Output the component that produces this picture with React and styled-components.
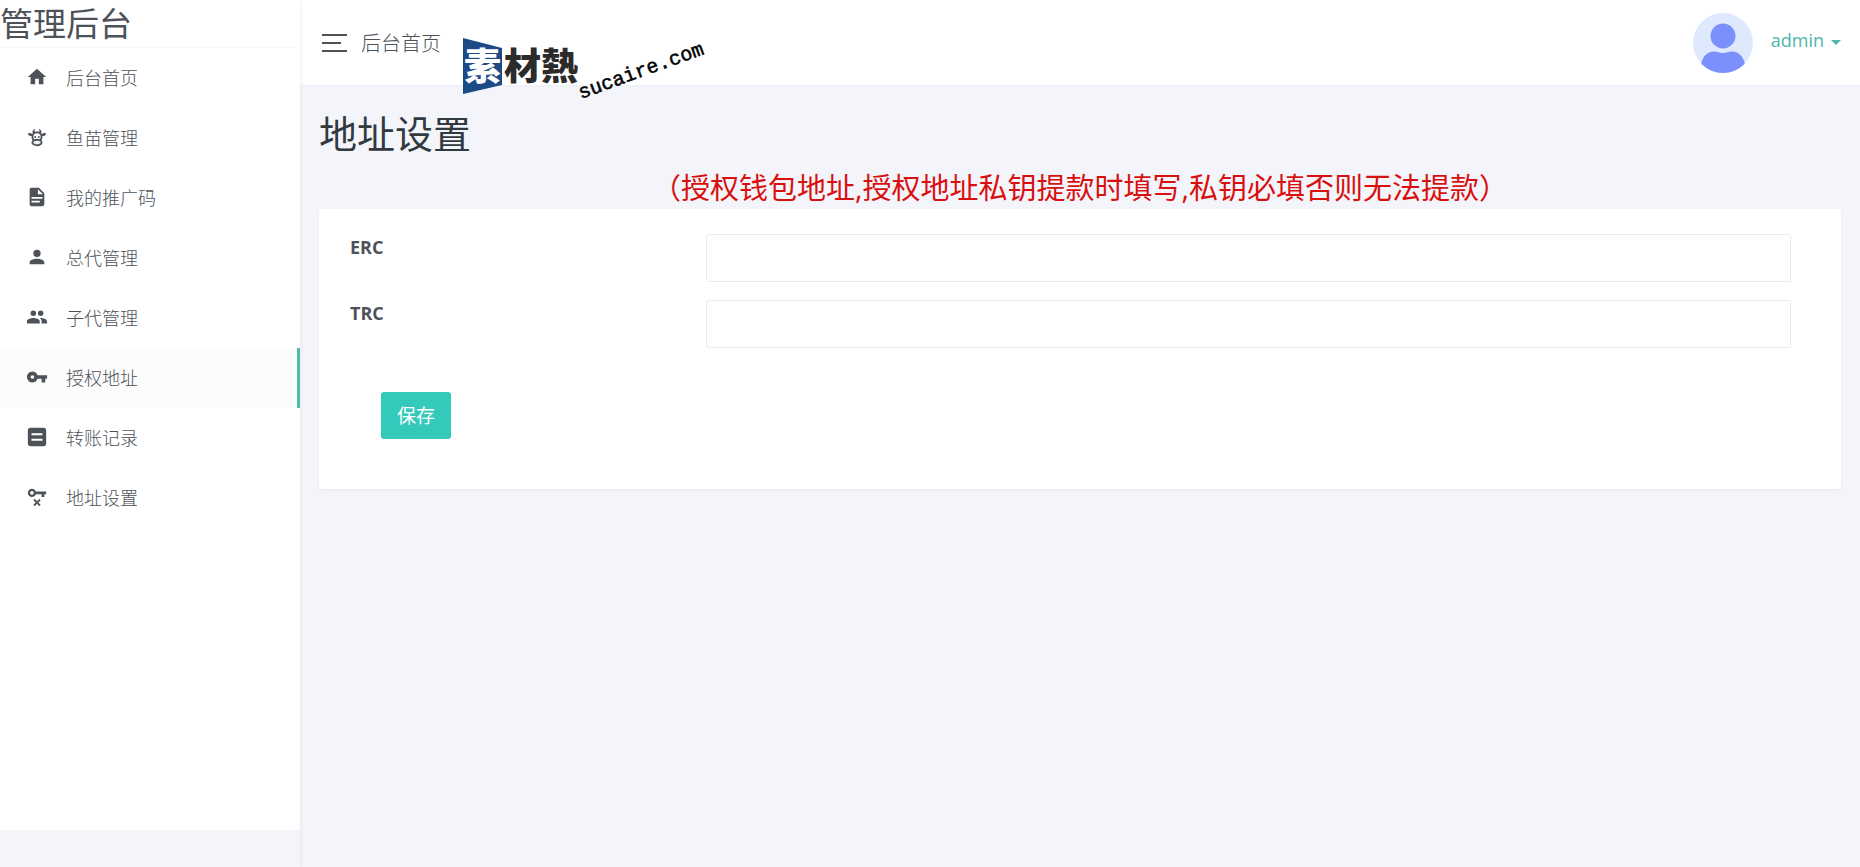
import React, { useState } from "react";
import styled, { createGlobalStyle, css } from "styled-components";

const icons = {
  home: "M10,20V14H14V20H19V12H22L12,3L2,12H5V20H10Z",
  cow: "M10.5,18A0.5,0.5 0 0,1 11,18.5A0.5,0.5 0 0,1 10.5,19A0.5,0.5 0 0,1 10,18.5A0.5,0.5 0 0,1 10.5,18M13.5,18A0.5,0.5 0 0,1 14,18.5A0.5,0.5 0 0,1 13.5,19A0.5,0.5 0 0,1 13,18.5A0.5,0.5 0 0,1 13.5,18M10,11A1,1 0 0,1 11,12A1,1 0 0,1 10,13A1,1 0 0,1 9,12A1,1 0 0,1 10,11M14,11A1,1 0 0,1 15,12A1,1 0 0,1 14,13A1,1 0 0,1 13,12A1,1 0 0,1 14,11M18,18C18,20.21 15.31,22 12,22C8.69,22 6,20.21 6,18C6,17.1 6.45,16.27 7.2,15.6C6.45,14.6 6,13.35 6,12L6.12,10.78C5.58,10.93 4.93,10.93 4.4,10.78C3.38,10.5 1.84,9.35 2.07,8.55C2.3,7.75 4.21,7.6 5.23,7.9C5.82,8.07 6.45,8.5 6.82,8.96L7.39,8.15C6.79,7.05 7,4 10,3L9.91,3.14V3.14C9.63,3.58 8.91,4.97 9.67,6.47C10.39,6.17 11.17,6 12,6C12.83,6 13.61,6.17 14.33,6.47C15.09,4.97 14.37,3.58 14.09,3.14L14,3C17,4 17.21,7.05 16.61,8.15L17.18,8.96C17.55,8.5 18.18,8.07 18.77,7.9C19.79,7.6 21.7,7.75 21.93,8.55C22.16,9.35 20.62,10.5 19.6,10.78C19.07,10.93 18.42,10.93 17.88,10.78L18,12C18,13.35 17.55,14.6 16.8,15.6C17.55,16.27 18,17.1 18,18M12,16C9.79,16 8,16.9 8,18C8,19.1 9.79,20 12,20C14.21,20 16,19.1 16,18C16,16.9 14.21,16 12,16M12,14C13.12,14 14.17,14.21 15.07,14.56C15.65,13.87 16,13 16,12A4,4 0 0,0 12,8A4,4 0 0,0 8,12C8,13 8.35,13.87 8.93,14.56C9.83,14.21 10.88,14 12,14Z",
  file: "M13,9H18.5L13,3.5V9M6,2H14L20,8V20A2,2 0 0,1 18,22H6C4.89,22 4,21.1 4,20V4C4,2.89 4.89,2 6,2M15,18V16H6V18H15M18,14V12H6V14H18Z",
  account:
    "M12,4A4,4 0 0,1 16,8A4,4 0 0,1 12,12A4,4 0 0,1 8,8A4,4 0 0,1 12,4M12,14C16.42,14 20,15.79 20,18V20H4V18C4,15.79 7.58,14 12,14Z",
  accounts:
    "M16,13C15.71,13 15.38,13 15.03,13.05C16.19,13.89 17,15 17,16.5V19H23V16.5C23,14.17 18.33,13 16,13M8,13C5.67,13 1,14.17 1,16.5V19H15V16.5C15,14.17 10.33,13 8,13M8,11A3,3 0 0,0 11,8A3,3 0 0,0 8,5A3,3 0 0,0 5,8A3,3 0 0,0 8,11M16,11A3,3 0 0,0 19,8A3,3 0 0,0 16,5A3,3 0 0,0 13,8A3,3 0 0,0 16,11Z",
  key: "M7,14A2,2 0 0,1 5,12A2,2 0 0,1 7,10A2,2 0 0,1 9,12A2,2 0 0,1 7,14M12.65,10C11.83,7.67 9.61,6 7,6A6,6 0 0,0 1,12A6,6 0 0,0 7,18C9.61,18 11.83,16.33 12.65,14H17V18H21V14H23V10H12.65Z",
  note: "M5,2H19A3,3 0 0,1 22,5V19A3,3 0 0,1 19,22H5A3,3 0 0,1 2,19V5A3,3 0 0,1 5,2M6,8V10H18V8H6M6,14V16H18V14H6Z",
  keyRemove:
    "M6.5,3C8.46,3 10.13,4.25 10.74,6H22V9H20V12H17V9H10.74C10.13,10.75 8.46,12 6.5,12A4.5,4.5 0 0,1 2,7.5A4.5,4.5 0 0,1 6.5,3M6.5,5.5A2,2 0 0,0 4.5,7.5A2,2 0 0,0 6.5,9.5A2,2 0 0,0 8.5,7.5A2,2 0 0,0 6.5,5.5M9.46,14L12,16.54L14.54,14L16,15.46L13.46,18L16,20.54L14.54,22L12,19.46L9.46,22L8,20.54L10.54,18L8,15.46Z",
};

const menu = [
  { icon: "home", label: "后台首页" },
  { icon: "cow", label: "鱼苗管理" },
  { icon: "file", label: "我的推广码" },
  { icon: "account", label: "总代管理" },
  { icon: "accounts", label: "子代管理" },
  { icon: "key", label: "授权地址", active: true },
  { icon: "note", label: "转账记录" },
  { icon: "keyRemove", label: "地址设置" },
];

const Icon = ({ name }) => (
  <svg width="22" height="22" viewBox="0 0 24 24" aria-hidden="true">
    <path d={icons[name]} fill="currentColor" fillRule="evenodd" />
  </svg>
);

const Watermark = () => (
  <WatermarkSvg width="250" height="70" viewBox="0 0 250 70" aria-hidden="true">
    <path d="M3,4L42,14V51L3,60Z" fill="#1c4a86" />
    <HanText x="4" y="46" fill="#fff">
      素
    </HanText>
    <HanText x="44" y="46" fill="#2b2b2b">
      材熱
    </HanText>
    <UrlText x="121" y="65" transform="rotate(-20 121 65)">
      sucaire.com
    </UrlText>
  </WatermarkSvg>
);

const Avatar = () => (
  <AvatarSvg width="60" height="60" viewBox="0 0 60 60" aria-hidden="true">
    <clipPath id="avatar">
      <circle cx="30" cy="30" r="30" />
    </clipPath>
    <g clipPath="url(#avatar)">
      <rect width="60" height="60" fill="#dfe9fe" />
      <circle cx="30" cy="23" r="12.5" fill="#7b90fd" />
      <path
        d="M8,60V52C9,44 14,38.500 21,38.500C25,38.500 26,40 30,40C34,40 35,38.500 39,38.500C46,38.500 51,44 52,52V60Z"
        fill="#7b90fd"
      />
    </g>
  </AvatarSvg>
);

const App = () => {
  const [erc, setErc] = useState("");
  const [trc, setTrc] = useState("");

  return (
    <Page>
      <GlobalStyle />
      <Sidebar>
        <SidebarBody>
          <Brand>管理后台</Brand>
          <Nav>
            {menu.map((item) => (
              <NavLink key={item.label} href="#" $active={item.active}>
                <Icon name={item.icon} />
                <span>{item.label}</span>
              </NavLink>
            ))}
          </Nav>
        </SidebarBody>
      </Sidebar>
      <Main>
        <Header>
          <Toggle type="button" aria-label="菜单">
            <Bar />
            <Bar $short />
            <Bar />
          </Toggle>
          <Crumb>后台首页</Crumb>
          <Watermark />
          <UserButton type="button">
            <Avatar />
            <UserName>
              admin
              <Caret />
            </UserName>
          </UserButton>
        </Header>
        <Content>
          <Title>地址设置</Title>
          <Notice>（授权钱包地址,授权地址私钥提款时填写,私钥必填否则无法提款）</Notice>
          <Card onSubmit={(e) => e.preventDefault()}>
            <Field>
              <Label htmlFor="erc">ERC</Label>
              <Input id="erc" value={erc} onChange={(e) => setErc(e.target.value)} />
            </Field>
            <Field>
              <Label htmlFor="trc">TRC</Label>
              <Input id="trc" value={trc} onChange={(e) => setTrc(e.target.value)} />
            </Field>
            <Save type="submit">保存</Save>
          </Card>
        </Content>
      </Main>
    </Page>
  );
};

const GlobalStyle = createGlobalStyle`
  * {
    box-sizing: border-box;
  }

  body {
    margin: 0;
    background: #f4f5fa;
    color: #4d5259;
    font-family: "Open Sans", "Noto Sans CJK SC", sans-serif;
    font-size: 18px;
    font-weight: 300;
  }

  button, input {
    font: inherit;
  }
`;

const Page = styled.div`
  display: flex;
  min-height: 100vh;
`;

const Sidebar = styled.aside`
  flex: 0 0 300px;
  padding-bottom: 37px;
  display: flex;
  box-shadow: 0 0 5px rgba(0, 0, 0, 0.08);
  z-index: 1;
`;

const SidebarBody = styled.div`
  flex: 1;
  background: #fff;
`;

const Brand = styled.div`
  height: 48px;
  border-bottom: 1px solid #f7f7f7;
  font-size: 33px;
  font-weight: 400;
  line-height: 48px;
`;

const Nav = styled.nav`
  display: flex;
  flex-direction: column;
`;

const NavLink = styled.a`
  display: flex;
  align-items: center;
  gap: 18px;
  height: 60px;
  padding: 0 0 2px 26px;
  border-right: 3px solid transparent;
  color: #4d5259;
  text-decoration: none;

  ${({ $active }) =>
    $active &&
    css`
      background: #fcfcfc;
      border-right-color: #52bbb1;
    `}
`;

const Main = styled.main`
  flex: 1;
  min-width: 0;
`;

const Header = styled.header`
  position: relative;
  display: flex;
  align-items: center;
  height: 85px;
  padding: 0 19px 0 22px;
  background: #fff;
  box-shadow: 0 1px 2px rgba(0, 0, 0, 0.03);
`;

const Toggle = styled.button`
  display: flex;
  flex-direction: column;
  gap: 6px;
  width: 25px;
  padding: 0;
  border: none;
  background: transparent;
  cursor: pointer;
`;

const Bar = styled.span`
  width: ${({ $short }) => ($short ? "19px" : "25px")};
  height: 2px;
  background: #4d5259;
`;

const Crumb = styled.span`
  margin-left: 14px;
  font-size: 20px;
`;

const WatermarkSvg = styled.svg`
  position: absolute;
  top: 34px;
  left: 160px;
  pointer-events: none;
`;

const HanText = styled.text`
  font-family: "Noto Sans CJK TC", sans-serif;
  font-size: 37px;
  font-weight: 900;
`;

const UrlText = styled.text`
  fill: #000;
  stroke: #000;
  stroke-width: 0.5px;
  font-family: "Liberation Mono", monospace;
  font-size: 20px;
  font-weight: 400;
`;

const UserButton = styled.button`
  display: flex;
  align-items: center;
  gap: 18px;
  margin-left: auto;
  padding: 0;
  border: none;
  background: transparent;
  color: #4db6ac;
  cursor: pointer;
`;

const AvatarSvg = styled.svg`
  display: block;
`;

const UserName = styled.span`
  display: flex;
  align-items: center;
  gap: 7px;
  padding-bottom: 5px;
  font-weight: 400;
`;

const Caret = styled.span`
  margin-top: 4px;
  border: 5px solid transparent;
  border-top-color: currentColor;
  border-bottom: none;
`;

const Content = styled.div`
  padding: 20px 19px;
`;

const Title = styled.h1`
  margin: 0 0 6px;
  color: #313a41;
  font-size: 38px;
  font-weight: 400;
  line-height: 56px;
`;

const Notice = styled.p`
  margin: 0;
  color: #d8100f;
  font-size: 29px;
  font-weight: 400;
  line-height: 42px;
  text-align: center;
`;

const Card = styled.form`
  display: flex;
  flex-direction: column;
  gap: 18px;
  padding: 25px 50px 50px 31px;
  border-radius: 4px;
  background: #fff;
  box-shadow: 0 1px 3px rgba(0, 0, 0, 0.06);
`;

const Field = styled.div`
  display: flex;
`;

const Label = styled.label`
  flex: 0 0 356px;
  font-weight: 700;
  line-height: 26px;
`;

const Input = styled.input`
  flex: 1;
  min-width: 0;
  height: 48px;
  padding: 0 15px;
  border: 1px solid #ebebeb;
  border-radius: 3px;
  background: #fff;
  color: inherit;
`;

const Save = styled.button`
  align-self: flex-start;
  height: 47px;
  margin: 26px 0 0 31px;
  padding: 0 16px 2px;
  border: none;
  border-radius: 3px;
  background: #33cabb;
  color: #fff;
  font-size: 19px;
  font-weight: 400;
  cursor: pointer;
`;

export default App;
